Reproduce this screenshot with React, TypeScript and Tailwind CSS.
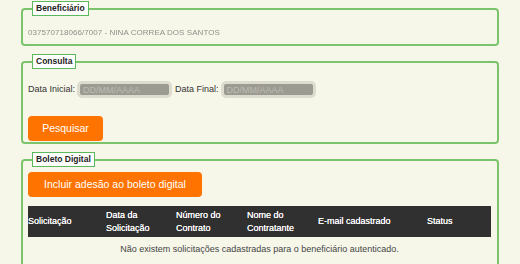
import React from 'react'

const font = { fontFamily: '"Liberation Sans", Arial, sans-serif' }

function Box({ title, className, children }: { title: string; className?: string; children: React.ReactNode }) {
  return (
    <fieldset className={`mx-[21px] w-[478px] rounded-[4px] border-2 border-[#7cc46c] px-[5px] ${className ?? ''}`}>
      <legend className="ml-[4px] border border-[#5cb85c] bg-white px-[3px] text-[8.5px] font-bold leading-[13px] text-[#222]">
        {title}
      </legend>
      {children}
    </fieldset>
  )
}

function DateInput({ label }: { label: string }) {
  return (
    <label className="flex items-center gap-[2px]">
      <span>{label}</span>
      <input
        placeholder="DD/MM/AAAA"
        className="h-[17px] w-[95px] rounded-[5px] border-[3px] border-[#dddccf] bg-[#9c9b92] px-[3px] text-[9px] text-[#444] outline-none placeholder:text-[#bdbcb3]"
      />
    </label>
  )
}

const columns = [
  { w: 'w-[78px]', lines: ['Solicitação'] },
  { w: 'w-[70px]', lines: ['Data da', 'Solicitação'] },
  { w: 'w-[71px]', lines: ['Número do', 'Contrato'] },
  { w: 'w-[71px]', lines: ['Nome do', 'Contratante'] },
  { w: 'w-[109px]', lines: ['E-mail cadastrado'] },
  { w: 'flex-1', lines: ['Status'] },
]

export default function App() {
  return (
    <div className="h-[264px] w-[520px] overflow-hidden bg-[#f7f7e9] pt-px text-[9px] text-[#333]" style={font}>
      {/* beneficiário */}
      <Box title="Beneficiário" className="h-[45px]">
        <p className="mt-[11px] select-none text-[8px] tracking-[0.05px] text-[#8f8f8a] blur-[0.7px]">
          037570718066/7007 - NINA CORREA DOS SANTOS
        </p>
      </Box>

      {/* consulta */}
      <Box title="Consulta" className="mt-[8px] h-[90px]">
        <div className="mt-[12px] flex items-center gap-[3px]">
          <DateInput label="Data Inicial:" />
          <DateInput label="Data Final:" />
        </div>
        <button className="mt-[18px] h-[25px] w-[75px] rounded-[4px] bg-[#ff7300] text-[10.5px] text-white">
          Pesquisar
        </button>
      </Box>

      {/* boleto digital */}
      <Box title="Boleto Digital" className="mt-[8px] h-[140px]">
        <button className="mt-[5px] h-[25px] w-[174px] rounded-[4px] bg-[#ff7300] text-[10.5px] text-white">
          Incluir adesão ao boleto digital
        </button>
        <div className="mt-[9px] w-[463px]">
          <div className="flex h-[31px] items-center bg-[#303030] text-[9px] leading-[13px] text-white [text-shadow:0_0_0.4px_#fff]">
            {columns.map((c) => (
              <div key={c.lines.join(' ')} className={c.w}>
                {c.lines.map((l) => (
                  <div key={l}>{l}</div>
                ))}
              </div>
            ))}
          </div>
          <div className="py-[6px] text-center text-[9px] text-[#444]">
            Não existem solicitações cadastradas para o beneficiário autenticado.
          </div>
        </div>
      </Box>
    </div>
  )
}
